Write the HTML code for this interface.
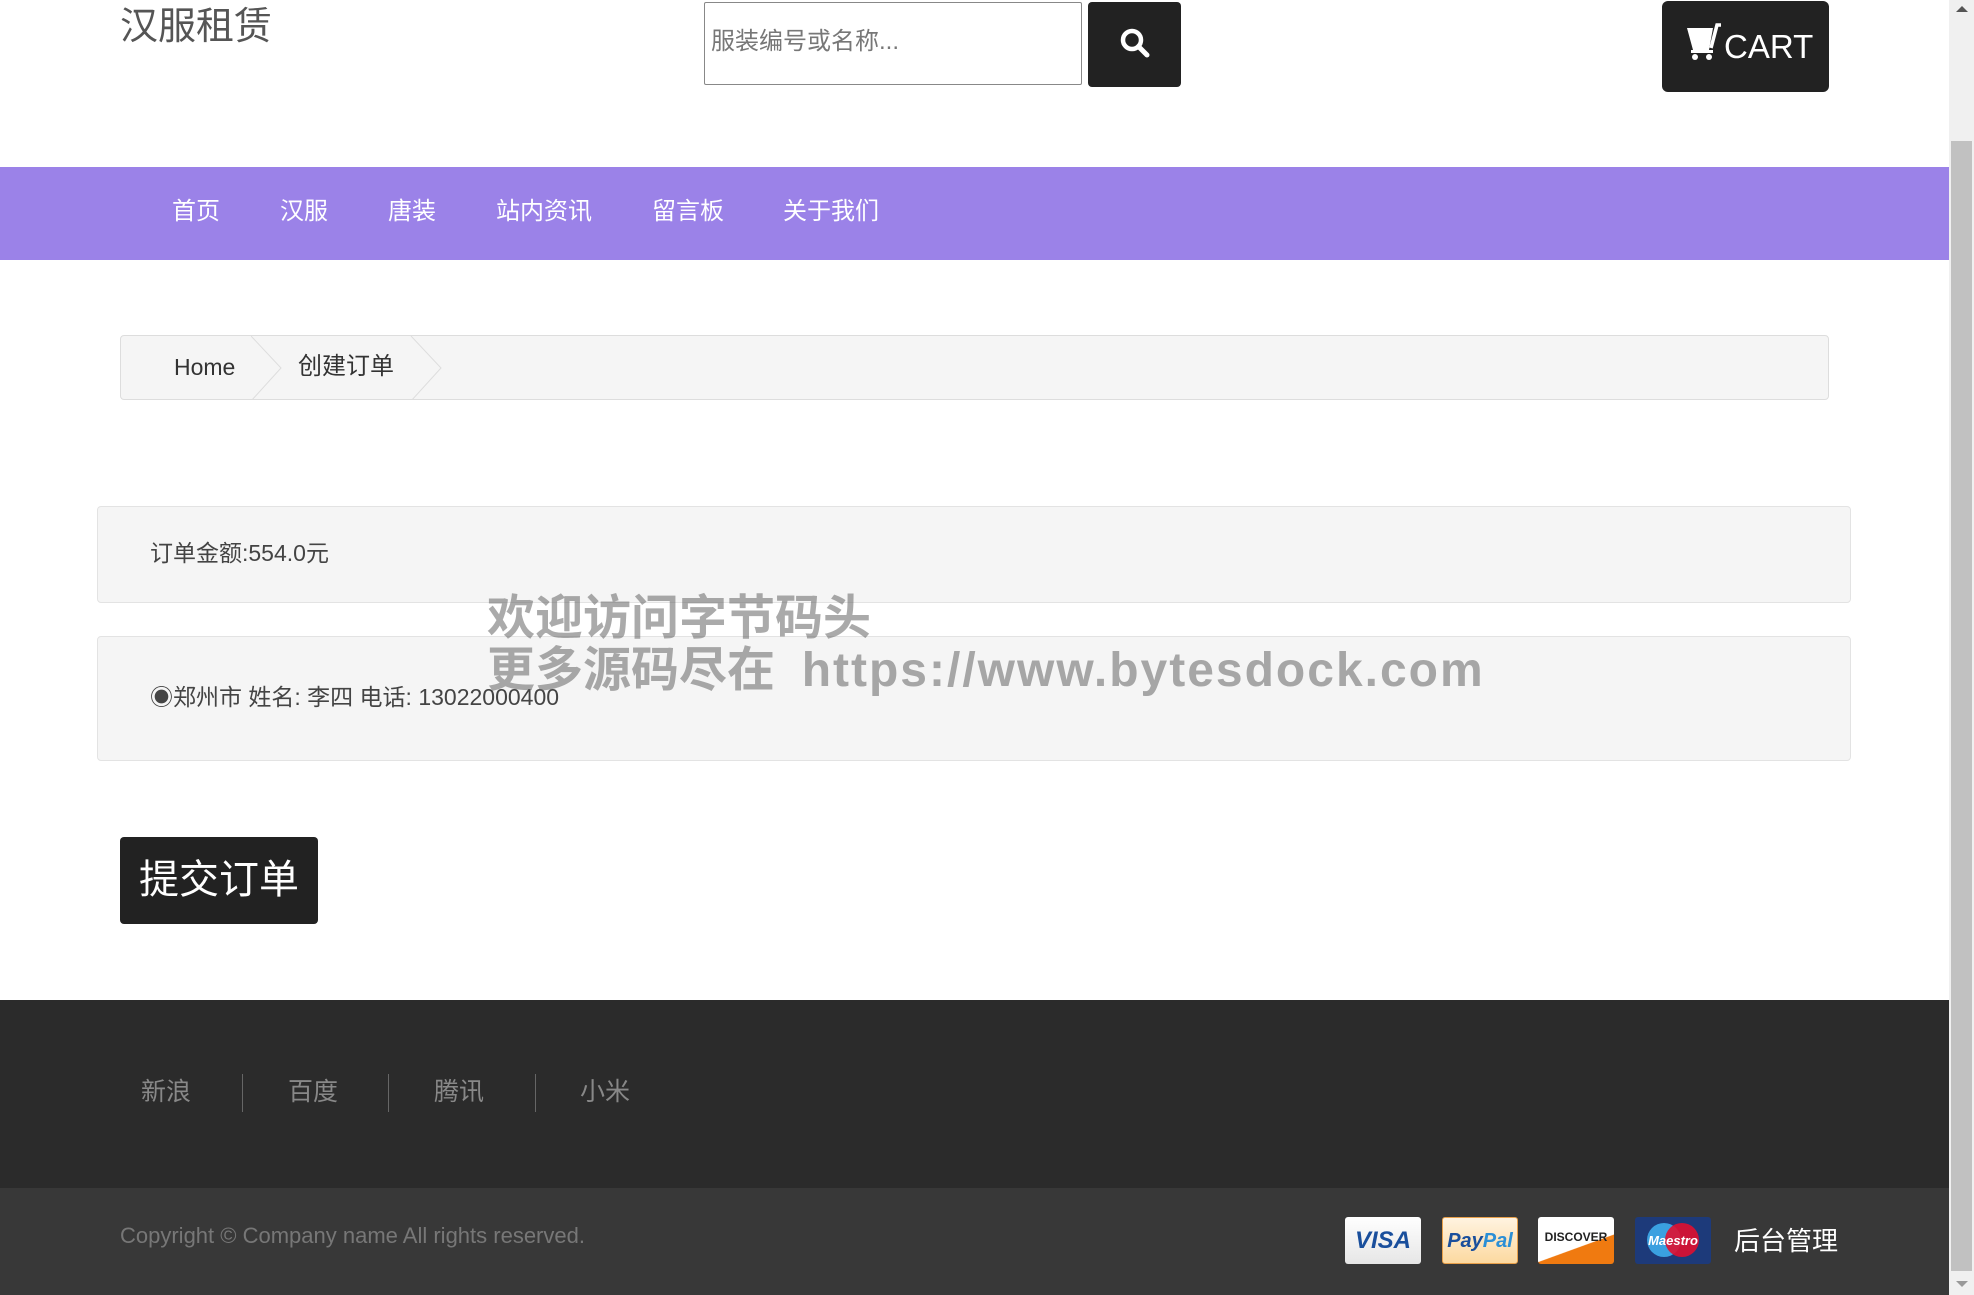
<!DOCTYPE html>
<html><head><meta charset="utf-8"><style>
*{box-sizing:border-box;margin:0;padding:0}
body{width:1974px;height:1295px;overflow:hidden;position:relative;background:#fff;font-family:"Liberation Sans","Noto Sans CJK SC",sans-serif}
.a{position:absolute}
.nav span{position:absolute;top:193px;color:#fff;font-size:24px;line-height:38px}
.ft span{position:absolute;top:1073px;color:#888;font-size:25px;line-height:38px}
.sep{position:absolute;top:1074px;width:1px;height:38px;background:#666}
.card{position:absolute;top:1217px;width:76px;height:47px;border-radius:3px;font-weight:bold;font-style:italic;font-family:"Liberation Sans",sans-serif;text-align:center;line-height:47px}
</style></head><body>
<div class="a" style="left:120px;top:4px;font-size:38px;color:#555;line-height:46px">汉服租赁</div>
<div class="a" style="left:704px;top:2px;width:378px;height:83px;border:1px solid #888;border-radius:2px"></div>
<div class="a" style="left:711px;top:24px;font-size:24px;color:#777;line-height:36px">服装编号或名称...</div>
<div class="a" style="left:1088px;top:2px;width:93px;height:85px;background:#222;border-radius:4px"></div>
<svg class="a" style="left:1119px;top:27px" width="32" height="32" viewBox="0 0 32 32"><circle cx="13" cy="13" r="9" fill="none" stroke="#fff" stroke-width="4.5"/><path d="M19.5 19.5 28 28" stroke="#fff" stroke-width="5" stroke-linecap="round"/></svg>
<div class="a" style="left:1662px;top:1px;width:167px;height:91px;background:#222;border-radius:6px"></div>
<svg class="a" style="left:1685px;top:22px" width="38" height="40" viewBox="0 0 38 40"><path d="M2 6h26l-4 22H8z" fill="#fff"/><path d="M26 26 32 3h4" stroke="#fff" stroke-width="3.5" fill="none"/><rect x="6" y="28" width="22" height="3" fill="#fff"/><circle cx="10" cy="35" r="3" fill="#fff"/><circle cx="24" cy="35" r="3" fill="#fff"/></svg>
<div class="a" style="left:1724px;top:26px;font-size:33px;color:#fff;line-height:42px">CART</div>
<div class="a" style="left:0;top:167px;width:1949px;height:93px;background:#9b82e8"></div>
<div class="nav"><span style="left:172px">首页</span><span style="left:280px">汉服</span><span style="left:388px">唐装</span><span style="left:496px">站内资讯</span><span style="left:652px">留言板</span><span style="left:783px">关于我们</span></div>
<div class="a" style="left:120px;top:335px;width:1709px;height:65px;background:#f5f5f5;border:1px solid #ddd;border-radius:4px;overflow:hidden">
<svg class="a" style="left:130px;top:0" width="200" height="65"><path d="M0 0 30 32 0 65M160 0 190 32 160 65" fill="none" stroke="#ddd"/></svg>
<div class="a" style="left:53px;top:15px;font-size:23px;color:#333;line-height:32px">Home</div>
<div class="a" style="left:177px;top:15px;font-size:24px;color:#333;line-height:32px">创建订单</div>
</div>
<div class="a" style="left:97px;top:506px;width:1754px;height:97px;background:#f5f5f5;border:1px solid #e3e3e3;border-radius:4px"></div>
<div class="a" style="left:150px;top:537px;font-size:23px;color:#444;line-height:32px">订单金额:554.0元</div>
<div class="a" style="left:97px;top:636px;width:1754px;height:125px;background:#f5f5f5;border:1px solid #e3e3e3;border-radius:4px"></div>
<div class="a" style="left:150px;top:681px;font-size:23px;color:#444;line-height:32px">◉郑州市 姓名: 李四 电话: 13022000400</div>
<div class="a" style="left:487px;top:593px;font-size:48px;font-weight:bold;color:rgba(100,100,100,.55);line-height:52px;white-space:pre">欢迎访问字节码头
更多源码尽在  <span style="letter-spacing:2px">https://www.bytesdock.com</span></div>
<div class="a" style="left:120px;top:837px;width:198px;height:87px;background:#222;border-radius:4px;color:#fff;font-size:40px;line-height:87px;text-align:center">提交订单</div>
<div class="a" style="left:0;top:1000px;width:1949px;height:188px;background:#2b2b2b"></div>
<div class="ft"><span style="left:141px">新浪</span><span style="left:288px">百度</span><span style="left:434px">腾讯</span><span style="left:580px">小米</span></div>
<div class="sep" style="left:242px"></div><div class="sep" style="left:388px"></div><div class="sep" style="left:535px"></div>
<div class="a" style="left:0;top:1188px;width:1949px;height:107px;background:#383838"></div>
<div class="a" style="left:120px;top:1220px;font-size:22px;color:#777;line-height:32px">Copyright © Company name All rights reserved.</div>
<div class="card" style="left:1345px;background:linear-gradient(#fff,#e6e6e6);color:#1a4f9c;font-size:24px">VISA</div>
<div class="card" style="left:1442px;background:linear-gradient(#fff3e0,#fcd9a0);border:1px solid #e8a04a;color:#1a4f9c;font-size:20px">Pay<span style="color:#2b8fd6">Pal</span></div>
<div class="card" style="left:1538px;background:linear-gradient(160deg,#fff 60%,#f07a10 61%);color:#222;font-size:12px;font-style:normal;line-height:40px">DISCOVER</div>
<div class="card" style="left:1635px;background:#1d3a7a;overflow:hidden"><div class="a" style="left:12px;top:6px;width:34px;height:34px;border-radius:50%;background:#3aa0e0"></div><div class="a" style="left:30px;top:6px;width:34px;height:34px;border-radius:50%;background:#e01030;opacity:.9"></div><div class="a" style="left:0;top:0;width:76px;color:#fff;font-size:13px">Maestro</div></div>
<div class="a" style="left:1734px;top:1223px;font-size:26px;color:#fff;line-height:36px">后台管理</div>
<div class="a" style="left:1949px;top:0;width:25px;height:1295px;background:#f0f0f0"></div>
<div class="a" style="left:1951px;top:141px;width:21px;height:1130px;background:#c1c1c1"></div>
<div class="a" style="left:1956px;top:6px;width:0;height:0;border-left:6px solid transparent;border-right:6px solid transparent;border-bottom:6px solid #555"></div>
<div class="a" style="left:1956px;top:1281px;width:0;height:0;border-left:6px solid transparent;border-right:6px solid transparent;border-top:6px solid #999"></div>
</body></html>
